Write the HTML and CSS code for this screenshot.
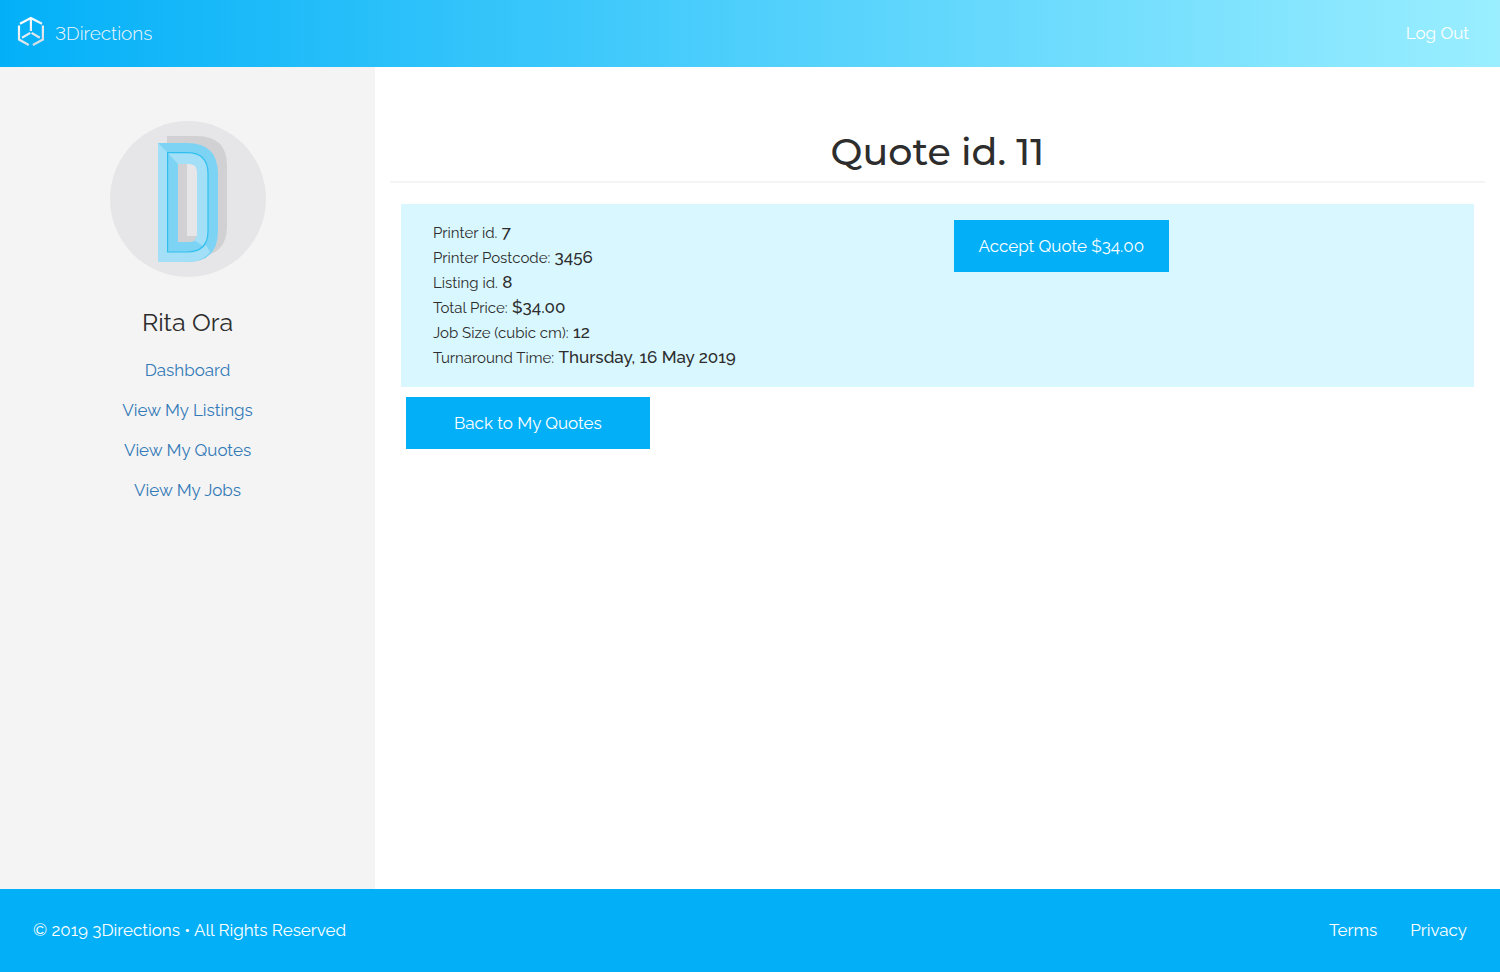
FILE: index.html
```html
<!DOCTYPE html>
<html lang="en">
<head>
<meta charset="utf-8">
<meta name="viewport" content="width=device-width, initial-scale=1">
<title>3Directions - Quote</title>
<link rel="stylesheet" href="styles.css">
</head>
<body class="page">
<header class="topbar">
  <a class="brand" href="#">
    <svg class="brand-mark" viewBox="0 0 28 34" aria-hidden="true">
      <defs>
        <linearGradient id="silver" gradientUnits="userSpaceOnUse" x1="8" y1="2" x2="20" y2="30">
          <stop offset="0" stop-color="#ffffff"/>
          <stop offset="1" stop-color="#d3dbe2"/>
        </linearGradient>
      </defs>
      <g fill="none" stroke="url(#silver)" stroke-width="2.2">
        <path d="M3 7.800 13.800 2 25 7.800"/>
        <path d="M2 9.500v14L11.800 29"/>
        <path d="M25.900 9.500v14L15.900 29"/>
        <path d="M13.900 2v13"/>
        <path d="M13.300 16.900 5 21.700M14.600 16.900l8.200 4.800"/>
      </g>
    </svg>
    <span>3Directions</span>
  </a>
  <a class="logout" href="#">Log Out</a>
</header>
<div class="layout">
  <aside class="sidebar">
    <svg class="avatar" viewBox="0 0 156 156" role="img" aria-label="Profile picture">
      <circle cx="78" cy="78" r="78" fill="#e6e6e8"/>
      <path fill="#d1d1d3" fill-rule="evenodd" d="M57 15h30q30 0 30 30v60q0 30-30 30H57zM77 42v73h10V42z"/>
      <path fill="#d1d1d3" d="M67 41h10v80H67z"/>
      <path fill="#d1d1d3" d="M67 115h21v7H67z"/>
      <path fill="#7cd3f4" fill-rule="evenodd" d="M48 22h29q31 0 31 31v57q0 31-31 31H48zM68 43v78h12q7 0 7-7V50q0-7-7-7z"/>
      <path fill="#a3dff7" d="M48 22l9 9v100h20q13 0 19-7l4 7q-8 10-23 10H48z"/>
      <path fill="#a3dff7" d="M57 31h20q21 0 21 21v59q0 8-5 14L84 119q3-2 3-5V50q0-7-7-7H68z"/>
      <path fill="none" stroke="#30c0ef" stroke-width="1.2" d="M57.600 31.600H77q21 0 21 21V110q0 21-21 21H57.600z"/>
    </svg>
    <h2 class="user-name">Rita Ora</h2>
    <nav class="side-nav" aria-label="Account">
      <a href="#">Dashboard</a>
      <a href="#">View My Listings</a>
      <a href="#">View My Quotes</a>
      <a href="#">View My Jobs</a>
    </nav>
  </aside>
  <main class="content">
    <h1 class="title">Quote id. 11</h1>
    <section class="quote">
      <dl class="details">
        <div><dt>Printer id.</dt> <dd>7</dd></div>
        <div><dt>Printer Postcode:</dt> <dd>3456</dd></div>
        <div><dt>Listing id.</dt> <dd>8</dd></div>
        <div><dt>Total Price:</dt> <dd>$34.00</dd></div>
        <div><dt>Job Size (cubic cm):</dt> <dd>12</dd></div>
        <div><dt>Turnaround Time:</dt> <dd>Thursday, 16 May 2019</dd></div>
      </dl>
      <div class="actions">
        <button class="btn" type="button">Accept Quote $34.00</button>
      </div>
    </section>
    <a class="btn btn-back" href="#">Back to My Quotes</a>
  </main>
</div>
<footer class="footer">
  <span>© 2019 3Directions • All Rights Reserved</span>
  <nav class="footer-nav" aria-label="Legal">
    <a href="#">Terms</a>
    <a href="#">Privacy</a>
  </nav>
</footer>
</body>
</html>
```
FILE: styles.css
```css
* { box-sizing: border-box; }

.page {
  margin: 0;
  min-height: 100vh;
  display: flex;
  flex-direction: column;
  background: #fff;
  color: #2d2d2d;
  font-family: Raleway, Lato, sans-serif;
  font-size: 17px;
  line-height: 24px;
}

.page a { text-decoration: none; }

.topbar {
  display: flex;
  align-items: center;
  justify-content: space-between;
  padding: 16px 31px 17px 17px;
  background: linear-gradient(to right, #03b0f8, #9aeeff);
}

.brand {
  display: flex;
  align-items: center;
  gap: 10px;
  color: #f0f6fa;
  font-size: 19px;
  font-weight: 300;
  font-variant-numeric: lining-nums;
}

.brand-mark { width: 28px; height: 34px; }

.logout { color: #fff; }

.layout { flex: 1; display: flex; }

.sidebar {
  width: 25%;
  display: flex;
  flex-direction: column;
  align-items: center;
  padding: 54px 16px;
  background: #f4f4f4;
}

.avatar { width: 156px; height: 156px; }

.user-name {
  margin: 29px 0 20px;
  font-size: 25px;
  font-weight: 400;
  line-height: 32px;
}

.side-nav {
  display: flex;
  flex-direction: column;
  align-items: center;
  gap: 16px;
}

.side-nav a { color: #337ab7; }

.content { flex: 1; padding: 61px 15px; }

.title {
  margin: 0 0 21px;
  padding-bottom: 5px;
  border-bottom: 2px solid #f4f4f4;
  font-family: Montserrat, Inter, sans-serif;
  font-size: 38px;
  font-weight: 500;
  line-height: 48px;
  text-align: center;
}

.quote {
  display: grid;
  grid-template-columns: 1fr 1fr;
  margin: 0 11px 10px;
  padding: 16px 0 17px 32px;
  background: #d9f7ff;
}

.details { margin: 0; line-height: 25px; }
.details dt, .details dd { display: inline; margin: 0; }
.details dt { font-size: 15px; line-height: 15px; }
.details dd { font-size: 17px; font-weight: 500; }

.btn {
  display: inline-block;
  padding: 14px 25px;
  border: 0;
  background: #03b0f8;
  color: #fff;
  font: inherit;
  text-align: center;
}

.btn-back { margin-left: 16px; padding: 14px 48px; }

.footer {
  display: flex;
  align-items: center;
  justify-content: space-between;
  padding: 29px 33px 30px;
  background: #03b0f8;
  color: #fff;
}

.footer-nav { display: flex; gap: 33px; }
.footer-nav a { color: #fff; }
```
